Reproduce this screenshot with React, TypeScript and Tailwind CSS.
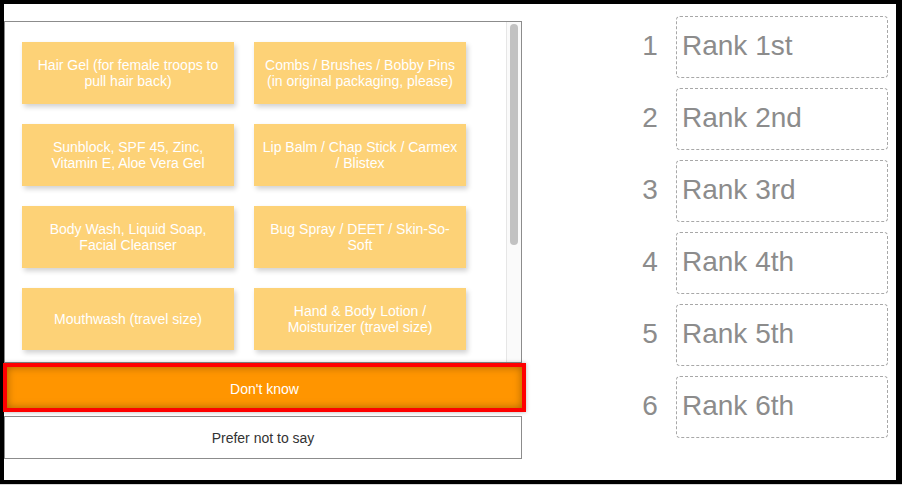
import React from 'react';

const items: string[][] = [
  ['Hair Gel (for female troops to', 'pull hair back)'],
  ['Combs / Brushes / Bobby Pins', '(in original packaging, please)'],
  ['Sunblock, SPF 45, Zinc,', 'Vitamin E, Aloe Vera Gel'],
  ['Lip Balm / Chap Stick / Carmex', '/ Blistex'],
  ['Body Wash, Liquid Soap,', 'Facial Cleanser'],
  ['Bug Spray / DEET / Skin-So-', 'Soft'],
  ['Mouthwash (travel size)'],
  ['Hand & Body Lotion /', 'Moisturizer (travel size)'],
];

const ranks = ['1st', '2nd', '3rd', '4th', '5th', '6th'];

function ItemCard({ lines }: { lines: string[] }) {
  return (
    <div className="h-[62px] bg-[#fdd277] shadow-[2px_3px_5px_rgba(0,0,0,0.18)] flex items-center justify-center px-[6px] text-center text-white text-[14px] leading-[16px]">
      <span>
        {lines.map((l, i) => (
          <React.Fragment key={i}>
            {i > 0 && <br />}
            {l}
          </React.Fragment>
        ))}
      </span>
    </div>
  );
}

function RankRow({ n, label }: { n: number; label: string }) {
  return (
    <div className="flex items-center mb-[10px]">
      <div className="w-[30px] mr-[11px] h-[62px] flex items-center justify-center pb-[2px] text-[28px] leading-[32px] text-[#8c8c8c]">
        {n}
      </div>
      <div className="w-[212px] h-[62px] border border-dashed border-[#a8a8a8] rounded-[4px] flex items-center pl-[5px] pb-[2px] text-[28px] leading-[32px] text-[#8c8c8c]">
        Rank {label}
      </div>
    </div>
  );
}

export default function App() {
  return (
    <div
      className="w-[902px] h-[485px] bg-[#d8d8d8] overflow-hidden"
      style={{ fontFamily: '"Liberation Sans", Arial, sans-serif' }}
    >
      <div className="h-[484px] bg-white border-t-4 border-l-4 border-b-4 border-r-[6px] border-black flex">
        {/* Left: scrollable answer options */}
        <div className="w-[518px] pt-[17px] flex flex-col">
          <div className="h-[342px] border border-[#8c8c8c] flex overflow-hidden">
            <div className="flex-1 overflow-hidden">
              <div className="grid grid-cols-[212px_212px] gap-[20px] pt-[20px] pl-[17px]">
                {items.map((lines, i) => (
                  <ItemCard key={i} lines={lines} />
                ))}
              </div>
            </div>
            <div className="w-[15px] bg-[#fafafa] border-l border-[#e6e6e6] pt-[2px] pl-[3px]">
              <div className="w-[8px] h-[221px] rounded-full bg-[#c2c2c2]" />
            </div>
          </div>

          <button className="-ml-px w-[523px] h-[49px] pt-[3px] border-4 border-[#ff0000] bg-[#ff9500] text-white text-[14px] shadow-[inset_0_0_8px_rgba(0,0,0,0.35),0_0_4px_rgba(0,0,0,0.3)]">
            Don&apos;t know
          </button>

          <button className="mt-[4px] w-[518px] h-[43px] pt-[2px] border border-[#8c8c8c] bg-white text-[#333] text-[14px]">
            Prefer not to say
          </button>
        </div>

        {/* Right: ranking slots */}
        <div className="ml-auto pt-[12px] pr-[8px]">
          {ranks.map((r, i) => (
            <RankRow key={r} n={i + 1} label={r} />
          ))}
        </div>
      </div>
    </div>
  );
}
